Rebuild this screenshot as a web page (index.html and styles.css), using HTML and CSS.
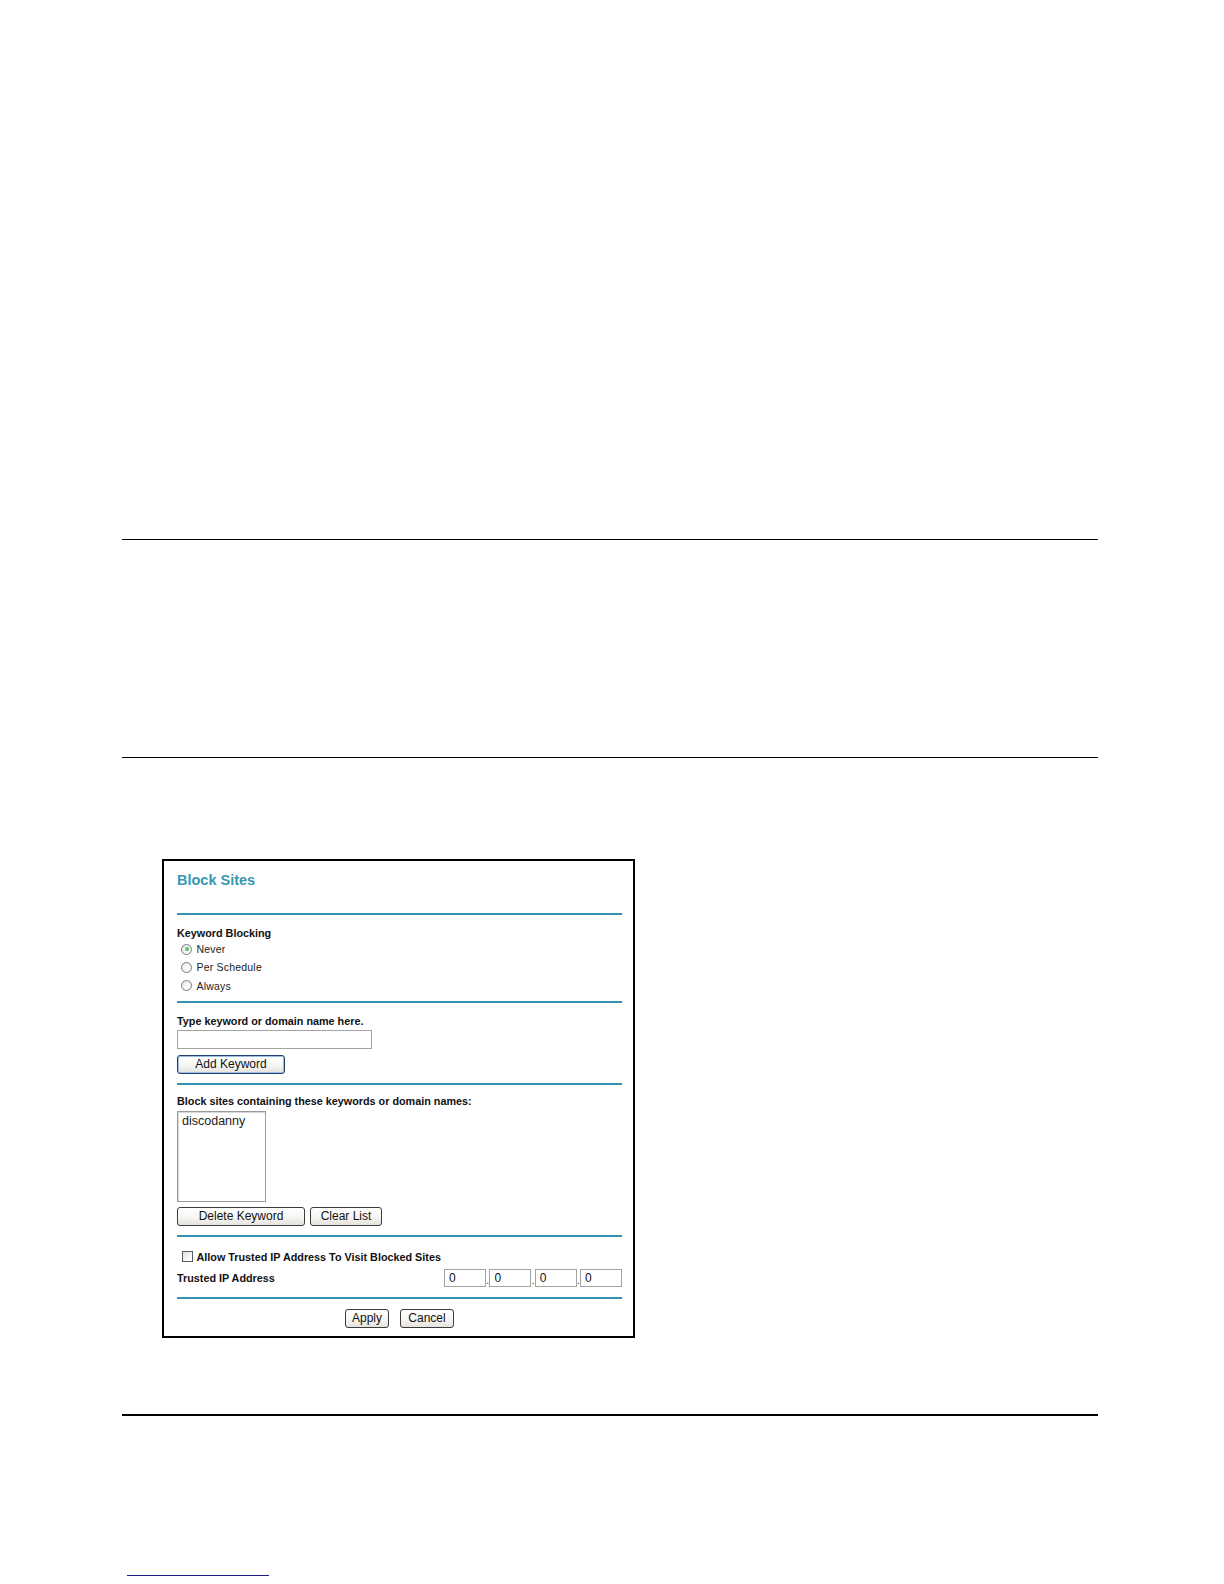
FILE: index.html
```html
<!DOCTYPE html>
<html>
<head>
<meta charset="utf-8">
<title>Block Sites</title>
<link rel="stylesheet" href="styles.css">
</head>
<body>
<div class="page">
  <div class="rule rule-a"></div>
  <div class="rule rule-b"></div>

  <div class="panel">
    <div class="title">Block Sites</div>
    <div class="bar bar-title"></div>

    <div class="label sec-first">Keyword Blocking</div>
    <div class="radio-row"><span class="radio checked"></span><span class="opt">Never</span></div>
    <div class="radio-row"><span class="radio"></span><span class="opt">Per Schedule</span></div>
    <div class="radio-row"><span class="radio"></span><span class="opt">Always</span></div>
    <div class="bar bar-radios"></div>

    <div class="label sec-first">Type keyword or domain name here.</div>
    <div class="textbox keyword"></div>
    <div class="btn-row add-row"><span class="btn btn-default add">Add Keyword</span></div>
    <div class="bar bar-add"></div>

    <div class="label sec-list">Block sites containing these keywords or domain names:</div>
    <div class="listbox"><div class="list-item">discodanny</div></div>
    <div class="btn-row del-row">
      <span class="btn del">Delete Keyword</span>
      <span class="btn clear">Clear List</span>
    </div>
    <div class="bar bar-list"></div>

    <div class="check-row"><span class="checkbox"></span><span class="label">Allow Trusted IP Address To Visit Blocked Sites</span></div>
    <div class="ip-row">
      <span class="label">Trusted IP Address</span>
      <span class="ip-group">
        <span class="textbox ip">0</span><span class="dot">.</span><span class="textbox ip">0</span><span class="dot">.</span><span class="textbox ip">0</span><span class="dot">.</span><span class="textbox ip">0</span>
      </span>
    </div>
    <div class="bar bar-ip"></div>

    <div class="btn-row submit-row">
      <span class="btn apply">Apply</span>
      <span class="btn cancel">Cancel</span>
    </div>
  </div>

  <div class="rule rule-c"></div>
  <div class="footnote-line"></div>
</div>
</body>
</html>
```

FILE: styles.css
```css
html, body {
  margin: 0;
  padding: 0;
  background: #ffffff;
}

body {
  font-family: "Liberation Sans", Arial, sans-serif;
  color: #000000;
}

.page {
  width: 976px;
  padding-left: 122px;
  padding-top: 539px;
  padding-bottom: 9px;
}

.rule {
  background: #000000;
  height: 1px;
}

.rule-b {
  margin-top: 217px;
}

.rule-c {
  height: 2px;
  margin-top: 76px;
}

.footnote-line {
  width: 142px;
  height: 1px;
  margin-left: 5px;
  margin-top: 158px;
  border-bottom: 1px solid #1b1b8a;
}

/* ---------- panel ---------- */
.panel {
  margin-left: 40px;
  margin-top: 101px;
  width: 445px;
  border: 2px solid #000000;
  padding: 10px 11px 8px 13px;
  display: flex;
  flex-direction: column;
}

.title {
  font-size: 14.5px;
  font-weight: bold;
  line-height: 18px;
  color: #3598b0;
}

.bar {
  height: 2px;
  background: #3491ad;
}

.bar-title { margin-top: 24px; }
.bar-radios { margin-top: 6px; }
.bar-add { margin-top: 9px; }
.bar-list { margin-top: 9px; }
.bar-ip { margin-top: 10px; }

.label {
  font-size: 10.8px;
  font-weight: bold;
  line-height: 14px;
  color: #111111;
  white-space: nowrap;
}

.sec-first { margin-top: 11px; }
.sec-list { margin-top: 9px; }

/* ---------- radios ---------- */
.radio-row {
  height: 18.3px;
  display: flex;
  align-items: center;
}

.radio {
  box-sizing: border-box;
  width: 11px;
  height: 11px;
  margin-left: 4px;
  border: 1px solid #7d7d7d;
  border-radius: 50%;
  background: radial-gradient(circle at 60% 60%, #ffffff 0%, #f2f2f2 50%, #d6d6d6 100%);
  position: relative;
}

.radio.checked::after {
  content: "";
  position: absolute;
  left: 2.5px;
  top: 2.5px;
  width: 4px;
  height: 4px;
  border-radius: 50%;
  background: radial-gradient(circle at 40% 40%, #8ee08e 0%, #3aa53a 70%, #2a8a2a 100%);
}

.opt {
  font-size: 10.5px;
  line-height: 14px;
  margin-left: 4.5px;
  color: #222222;
  letter-spacing: 0.2px;
}

/* ---------- inputs ---------- */
.textbox {
  box-sizing: border-box;
  height: 19px;
  border: 1px solid #a3a3a3;
  background: #ffffff;
  font-size: 12px;
  line-height: 17px;
  color: #111111;
}

.keyword {
  width: 195px;
  margin-top: 2px;
}

.listbox {
  box-sizing: border-box;
  width: 89px;
  height: 91px;
  margin-top: 3px;
  border: 1px solid #9a9a9a;
  box-shadow: inset 1px 1px 0 #d8d8d8;
  padding: 2px 0 0 4px;
}

.list-item {
  font-size: 12.5px;
  line-height: 15px;
  color: #222222;
}

/* ---------- buttons ---------- */
.btn-row {
  display: flex;
  height: 19px;
}

.add-row { margin-top: 6px; }
.del-row { margin-top: 5px; gap: 5px; }
.submit-row { margin-top: 10px; justify-content: center; gap: 11px; }

.btn {
  box-sizing: border-box;
  height: 19px;
  border: 1px solid #3c3c3c;
  border-radius: 3px;
  background: linear-gradient(#ffffff 0%, #f6f6f3 55%, #e3e2dc 100%);
  font-size: 12px;
  line-height: 17px;
  text-align: center;
  color: #111111;
  white-space: nowrap;
}

.btn-default {
  border-color: #1f3f6e;
  box-shadow: inset 0 0 0 1px #9dbde6;
}

.add { width: 108px; }
.del { width: 128px; }
.clear { width: 72px; }
.apply { width: 44px; }
.cancel { width: 54px; }

/* ---------- trusted IP ---------- */
.check-row {
  margin-top: 13px;
  display: flex;
  align-items: center;
  height: 14px;
}

.checkbox {
  box-sizing: border-box;
  width: 11px;
  height: 11px;
  margin-left: 4.5px;
  margin-right: 4px;
  border: 1px solid #555a60;
  background: linear-gradient(135deg, #e2e2dc 0%, #f7f7f5 60%, #ffffff 100%);
}

.ip-row {
  margin-top: 5px;
  height: 18.5px;
  display: flex;
  align-items: center;
  justify-content: space-between;
}

.ip-group {
  display: flex;
  align-items: stretch;
}

.ip {
  width: 42px;
  height: 18.5px;
  padding-left: 4px;
}

.dot {
  width: 3.3px;
  display: flex;
  align-items: flex-end;
  justify-content: center;
  font-size: 10px;
  line-height: 12px;
  color: #333333;
}
```
